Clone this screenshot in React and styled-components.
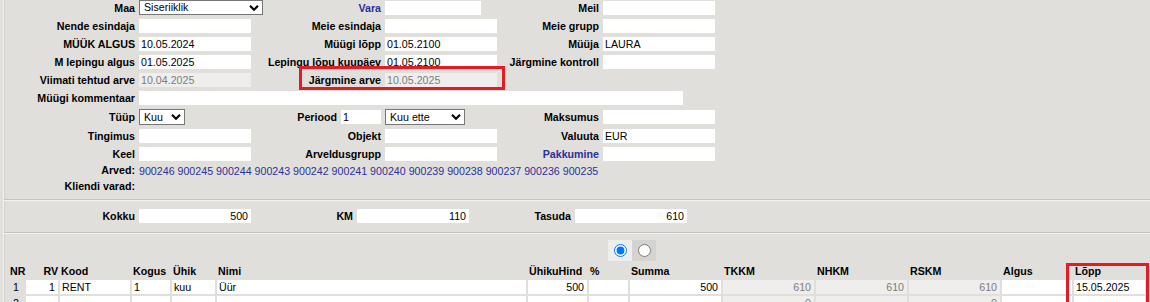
import React from 'react';
import styled, { createGlobalStyle } from 'styled-components';

const FONT = '"Liberation Sans", Arial, Helvetica, sans-serif';
const BLUE = '#2c2f9c';

const Global = createGlobalStyle`
  html, body { margin: 0; padding: 0; background: #e0dfdb; overflow: hidden; }
  body { font-family: ${FONT}; font-size: 8pt; color: #000; }
  * { box-sizing: border-box; }
`;

const Page = styled.div`
  position: relative;
  width: 1150px;
  height: 302px;
  overflow: hidden;
  background: #e0dfdb;
  padding-left: 3px;
`;

const Frame = styled.div`
  border-left: 1px solid #f3f2f0;
  box-shadow: inset 1px 0 0 #d2d1cd;
  min-height: 320px;
`;

const FormGrid = styled.div`
  display: grid;
  grid-template-columns: ${p => p.$cols};
  column-gap: 4px;
  row-gap: 4px;
  align-items: center;
  padding: ${p => p.$pad || '0'};
`;

const Label = styled.label`
  font-weight: bold;
  text-align: right;
  white-space: nowrap;
  line-height: 14px;
  color: ${p => (p.$link ? BLUE : '#000')};
`;

const Field = styled.input`
  display: block;
  width: ${p => (p.$w ? `${p.$w}px` : '100%')};
  height: ${p => p.$h || 14}px;
  border: 0;
  outline: 0;
  margin: 0;
  padding: 0 ${p => (p.$right ? '3px' : '2px')};
  background: ${p => (p.$muted ? '#efeeec' : '#fff')};
  color: ${p => (p.$muted ? '#7c7c7c' : '#000')};
  font: 8pt ${FONT};
  text-align: ${p => (p.$right ? 'right' : 'left')};
`;

const SelectWrap = styled.div`
  position: relative;
  width: ${p => p.$w}px;
  height: ${p => p.$h || 15}px;
`;

const Select = styled.select`
  appearance: none;
  -webkit-appearance: none;
  display: block;
  width: 100%;
  height: 100%;
  margin: 0;
  border: 1px solid #767676;
  border-radius: 0;
  background: #fff;
  padding: 0 0 0 4px;
  font: 8pt ${FONT};
  line-height: 13px;
  color: #000;
  outline: 0;
`;

const Chevron = styled.svg`
  position: absolute;
  right: 4px;
  top: 50%;
  transform: translateY(-50%);
  pointer-events: none;
`;

const Inline = styled.div`
  display: flex;
  justify-content: flex-end;
  align-items: center;
  gap: 4px;
`;

const InfoBlock = styled.div`
  margin-top: 2px;
`;

const InfoRow = styled.div`
  display: grid;
  grid-template-columns: 131px 1fr;
  column-gap: 4px;
  line-height: 16px;
`;

const LinkList = styled.div`
  color: ${BLUE};
  white-space: nowrap;
`;

const Separator = styled.div`
  margin-top: ${p => p.$mt || 0}px;
  border-top: 1px solid #c4c3bf;
  border-bottom: 1px solid #f4f3f1;
`;

const RadioBar = styled.div`
  display: flex;
  margin: 6px 0 0 604px;
`;

const RadioCell = styled.div`
  width: ${p => p.$w}px;
  height: 21px;
  display: flex;
  align-items: center;
  justify-content: center;
  background: ${p => (p.$active ? '#eeeeec' : '#d4d3cf')};
`;

const Radio = styled.input`
  margin: 0;
  width: 13px;
  height: 13px;
`;

const Table = styled.div`
  display: grid;
  grid-template-columns: 15px 32px 70px 38px 43px 309px 59px 39px 91px 91px 91px 91px 70px 71px;
  column-gap: 2px;
  row-gap: 2px;
  margin-top: 3px;
  padding-left: 5px;
  align-items: center;
`;

const Th = styled.div`
  font-weight: bold;
  line-height: 14px;
  white-space: nowrap;
  text-align: ${p => (p.$right ? 'right' : 'left')};
  padding-left: ${p => (p.$right ? 0 : 1)}px;
`;

const Nr = styled.div`
  line-height: 14px;
  padding-left: 4px;
`;

const RedBox = styled.div`
  position: absolute;
  left: ${p => p.$x}px;
  top: ${p => p.$y}px;
  width: ${p => p.$w}px;
  height: ${p => p.$h}px;
  border: 3px solid #e31b23;
  pointer-events: none;
`;

const Dropdown = ({ w, h, value, options }) => (
  <SelectWrap $w={w} $h={h}>
    <Select defaultValue={value}>
      {options.map(o => (
        <option key={o}>{o}</option>
      ))}
    </Select>
    <Chevron width="10" height="7" viewBox="0 0 10 7">
      <path d="M1 1.2 L5 5.2 L9 1.2" fill="none" stroke="#000" strokeWidth="2.2" />
    </Chevron>
  </SelectWrap>
);

const Empty = () => <div />;

const invoices = [
  '900246', '900245', '900244', '900243', '900242', '900241',
  '900240', '900239', '900238', '900237', '900236', '900235',
];

const headers = [
  ['NR'], ['RV', true], ['Kood'], ['Kogus'], ['Ühik'], ['Nimi'], ['ÜhikuHind'], ['%'],
  ['Summa'], ['TKKM'], ['NHKM'], ['RSKM'], ['Algus'], ['Lõpp'],
];

const rows = [
  { nr: '1', rv: '1', kood: 'RENT', kogus: '1', yhik: 'kuu', nimi: 'Üür', hind: '500', pct: '', summa: '500', tk: '610', nh: '610', rs: '610', algus: '', lopp: '15.05.2025' },
  { nr: '2', rv: '', kood: '', kogus: '', yhik: '', nimi: '', hind: '', pct: '', summa: '', tk: '0', nh: '', rs: '0', algus: '', lopp: '' },
];

export default function App() {
  return (
    <Page>
      <Global />
      <Frame>
        <FormGrid $cols="131px 112px 126px 112px 98px 112px">
          <Label>Maa</Label>
          <Dropdown w={124} h={15} value="Siseriiklik" options={['Siseriiklik', 'EL', 'Väljaspool EL']} />
          <Label $link>Vara</Label>
          <Field $w={96} defaultValue="" />
          <Label>Meil</Label>
          <Field defaultValue="" />

          <Label>Nende esindaja</Label>
          <Field defaultValue="" />
          <Label>Meie esindaja</Label>
          <Field defaultValue="" />
          <Label>Meie grupp</Label>
          <Field defaultValue="" />

          <Label>MÜÜK ALGUS</Label>
          <Field defaultValue="10.05.2024" />
          <Label>Müügi lõpp</Label>
          <Field defaultValue="01.05.2100" />
          <Label>Müüja</Label>
          <Field defaultValue="LAURA" />

          <Label>M lepingu algus</Label>
          <Field defaultValue="01.05.2025" />
          <Label>Lepingu lõpu kuupäev</Label>
          <Field defaultValue="01.05.2100" />
          <Label>Järgmine kontroll</Label>
          <Field defaultValue="" />

          <Label>Viimati tehtud arve</Label>
          <Field $muted readOnly defaultValue="10.04.2025" />
          <Label>Järgmine arve</Label>
          <Field $muted readOnly defaultValue="10.05.2025" />
          <Empty />
          <Empty />

          <Label>Müügi kommentaar</Label>
          <div style={{ gridColumn: '2 / span 5' }}>
            <Field $w={544} defaultValue="" />
          </div>

          <Label>Tüüp</Label>
          <Dropdown w={46} h={16} value="Kuu" options={['Kuu', 'Aasta']} />
          <Inline>
            <Label>Periood</Label>
            <Field $w={40} defaultValue="1" />
          </Inline>
          <Dropdown w={80} h={16} value="Kuu ette" options={['Kuu ette', 'Kuu taga']} />
          <Label>Maksumus</Label>
          <Field defaultValue="" />

          <Label>Tingimus</Label>
          <Field defaultValue="" />
          <Label>Objekt</Label>
          <Field defaultValue="" />
          <Label>Valuuta</Label>
          <Field defaultValue="EUR" />

          <Label>Keel</Label>
          <Field defaultValue="" />
          <Label>Arveldusgrupp</Label>
          <Field defaultValue="" />
          <Label $link>Pakkumine</Label>
          <Field defaultValue="" />
        </FormGrid>

        <InfoBlock>
          <InfoRow>
            <Label>Arved:</Label>
            <LinkList>{invoices.join(' ')}</LinkList>
          </InfoRow>
          <InfoRow>
            <Label>Kliendi varad:</Label>
            <div />
          </InfoRow>
        </InfoBlock>

        <Separator $mt={6} />

        <FormGrid $cols="131px 112px 98px 112px 98px 112px" $pad="8px 0 9px">
          <Label>Kokku</Label>
          <Field $right defaultValue="500" />
          <Label>KM</Label>
          <Field $right defaultValue="110" />
          <Label>Tasuda</Label>
          <Field $right defaultValue="610" />
        </FormGrid>

        <Separator />

        <RadioBar>
          <RadioCell $active $w={24}>
            <Radio type="radio" name="view" defaultChecked />
          </RadioCell>
          <RadioCell $w={24}>
            <Radio type="radio" name="view" />
          </RadioCell>
        </RadioBar>

        <Table>
          {headers.map(([h, right]) => (
            <Th key={h} $right={right}>{h}</Th>
          ))}
          {rows.map(r => (
            <React.Fragment key={r.nr}>
              <Nr>{r.nr}</Nr>
              <Field $right defaultValue={r.rv} />
              <Field defaultValue={r.kood} />
              <Field defaultValue={r.kogus} />
              <Field defaultValue={r.yhik} />
              <Field defaultValue={r.nimi} />
              <Field $right defaultValue={r.hind} />
              <Field $right defaultValue={r.pct} />
              <Field $right defaultValue={r.summa} />
              <Field $right $muted readOnly defaultValue={r.tk} />
              <Field $right $muted readOnly defaultValue={r.nh} />
              <Field $right $muted readOnly defaultValue={r.rs} />
              <Field defaultValue={r.algus} />
              <Field defaultValue={r.lopp} />
            </React.Fragment>
          ))}
        </Table>
      </Frame>

      <RedBox $x={299} $y={66} $w={206} $h={24} />
      <RedBox $x={1066} $y={263} $w={83} $h={50} />
    </Page>
  );
}
